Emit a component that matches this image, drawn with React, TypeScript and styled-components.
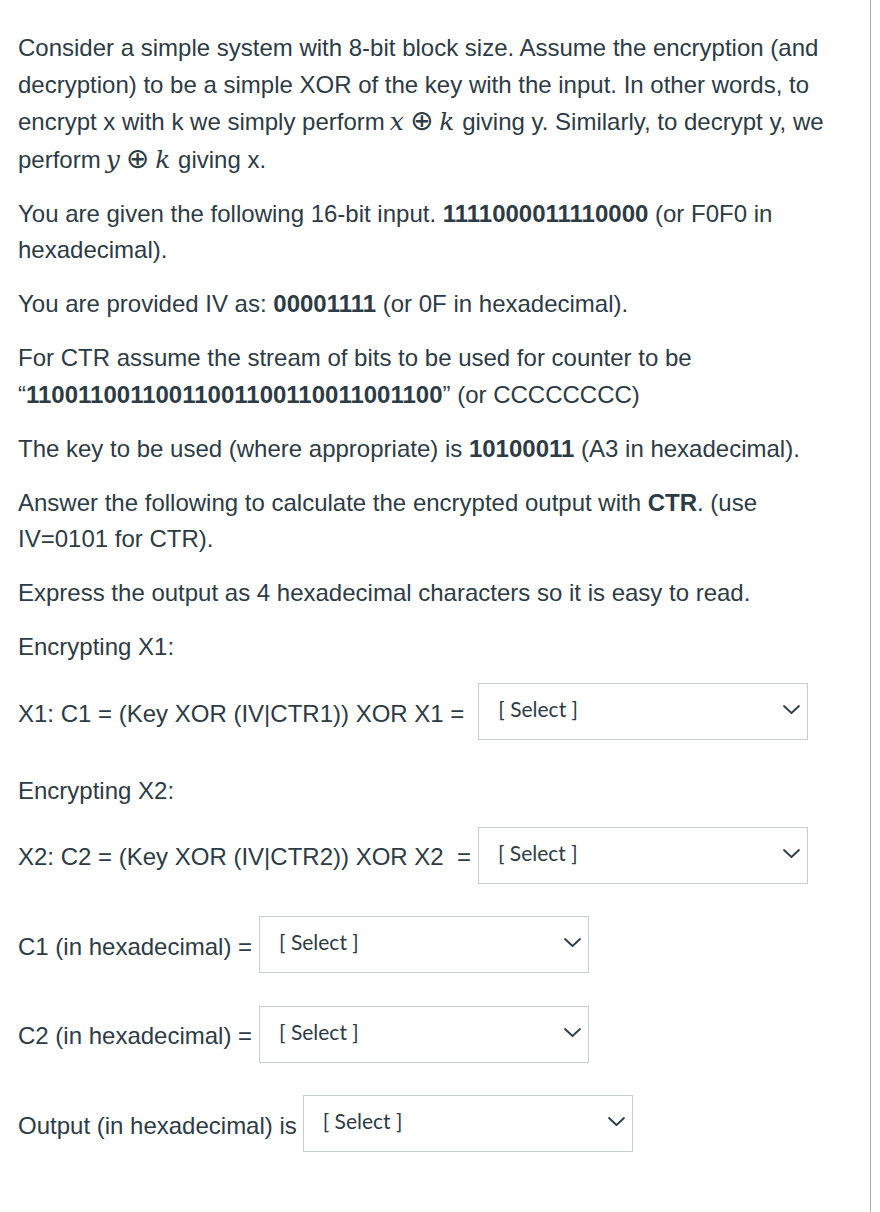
import React from "react";
import styled, { createGlobalStyle } from "styled-components";

const Global = createGlobalStyle`
  html, body { margin: 0; padding: 0; background: #ffffff; }
  body { font-family: "Liberation Sans", Arial, Helvetica, sans-serif; }
`;

const Page = styled.div`
  box-sizing: border-box;
  width: 871px;
  min-height: 100vh;
  border-right: 1px solid #ababab;
  padding: 30px 30px 0 18px;
  color: #2d3b45;
  font-family: "Liberation Sans", Arial, Helvetica, sans-serif;
  font-size: 24px;
  line-height: 36.5px;
`;

const P = styled.p`
  margin: 0 0 17.5px 0;
`;

const B = styled.strong`
  font-weight: 700;
`;

const MathSpan = styled.span`
  font-family: "DejaVu Serif", "Liberation Serif", serif;
  font-size: 25px;
  margin: 0 1px 0 5px;
  white-space: nowrap;
`;

const Var = styled.i`
  font-style: italic;
`;

const Op = styled.span`
  font-family: "DejaVu Sans", sans-serif;
  font-style: normal;
  font-size: 28px;
  margin: 0 6px;
`;

const Row = styled.div`
  display: flex;
  align-items: center;
  height: 57px;
  margin: 17px 0 32.5px 0;
`;

const Label = styled.span`
  white-space: pre;
  padding-top: 5px;
`;

const SelectBox = styled.div<{ $gap: number }>`
  box-sizing: border-box;
  display: flex;
  align-items: center;
  justify-content: space-between;
  width: 330px;
  height: 57px;
  margin-left: ${(p) => p.$gap}px;
  padding: 0 7px 4px 19px;
  border: 1px solid #c7cdd1;
  background: #ffffff;
  font-family: Lato, "Noto Sans", sans-serif;
  font-size: 21px;
  color: #2d3b45;
`;

const Chevron = styled.svg`
  width: 17px;
  height: 9px;
  flex: none;
`;

function Select({ gap }: { gap: number }) {
  return (
    <SelectBox $gap={gap}>
      <span>[ Select ]</span>
      <Chevron viewBox="0 0 17 9">
        <polyline
          points="1,1 8.5,8 16,1"
          fill="none"
          stroke="#2d3b45"
          strokeWidth="1.8"
          strokeLinecap="round"
          strokeLinejoin="round"
        />
      </Chevron>
    </SelectBox>
  );
}

export default function App() {
  return (
    <>
      <Global />
      <Page>
        <P>
          Consider a simple system with 8-bit block size. Assume the encryption (and
          decryption) to be a simple XOR of the key with the input. In other words, to
          encrypt x with k we simply perform
          <MathSpan>
            <Var>x</Var>
            <Op>⊕</Op>
            <Var>k</Var>
          </MathSpan>{" "}
          giving y. Similarly, to decrypt y, we perform
          <MathSpan>
            <Var>y</Var>
            <Op>⊕</Op>
            <Var>k</Var>
          </MathSpan>{" "}
          giving x.
        </P>
        <P>
          You are given the following 16-bit input. <B>1111000011110000</B> (or F0F0 in
          hexadecimal).
        </P>
        <P>
          You are provided IV as: <B>00001111</B> (or 0F in hexadecimal).
        </P>
        <P>
          For CTR assume the stream of bits to be used for counter to be “
          <B>11001100110011001100110011001100</B>” (or CCCCCCCC)
        </P>
        <P>
          The key to be used (where appropriate) is <B>10100011</B> (A3 in hexadecimal).
        </P>
        <P>
          Answer the following to calculate the encrypted output with <B>CTR</B>. (use
          IV=0101 for CTR).
        </P>
        <P>Express the output as 4 hexadecimal characters so it is easy to read.</P>
        <P>Encrypting X1:</P>
        <Row>
          <Label>X1: C1 = (Key XOR (IV|CTR1)) XOR X1 =</Label>
          <Select gap={14} />
        </Row>
        <P>Encrypting X2:</P>
        <Row>
          <Label>X2: C2 = (Key XOR (IV|CTR2)) XOR X2  =</Label>
          <Select gap={7} />
        </Row>
        <Row>
          <Label>C1 (in hexadecimal) =</Label>
          <Select gap={7} />
        </Row>
        <Row>
          <Label>C2 (in hexadecimal) =</Label>
          <Select gap={7} />
        </Row>
        <Row>
          <Label>Output (in hexadecimal) is</Label>
          <Select gap={6} />
        </Row>
      </Page>
    </>
  );
}
